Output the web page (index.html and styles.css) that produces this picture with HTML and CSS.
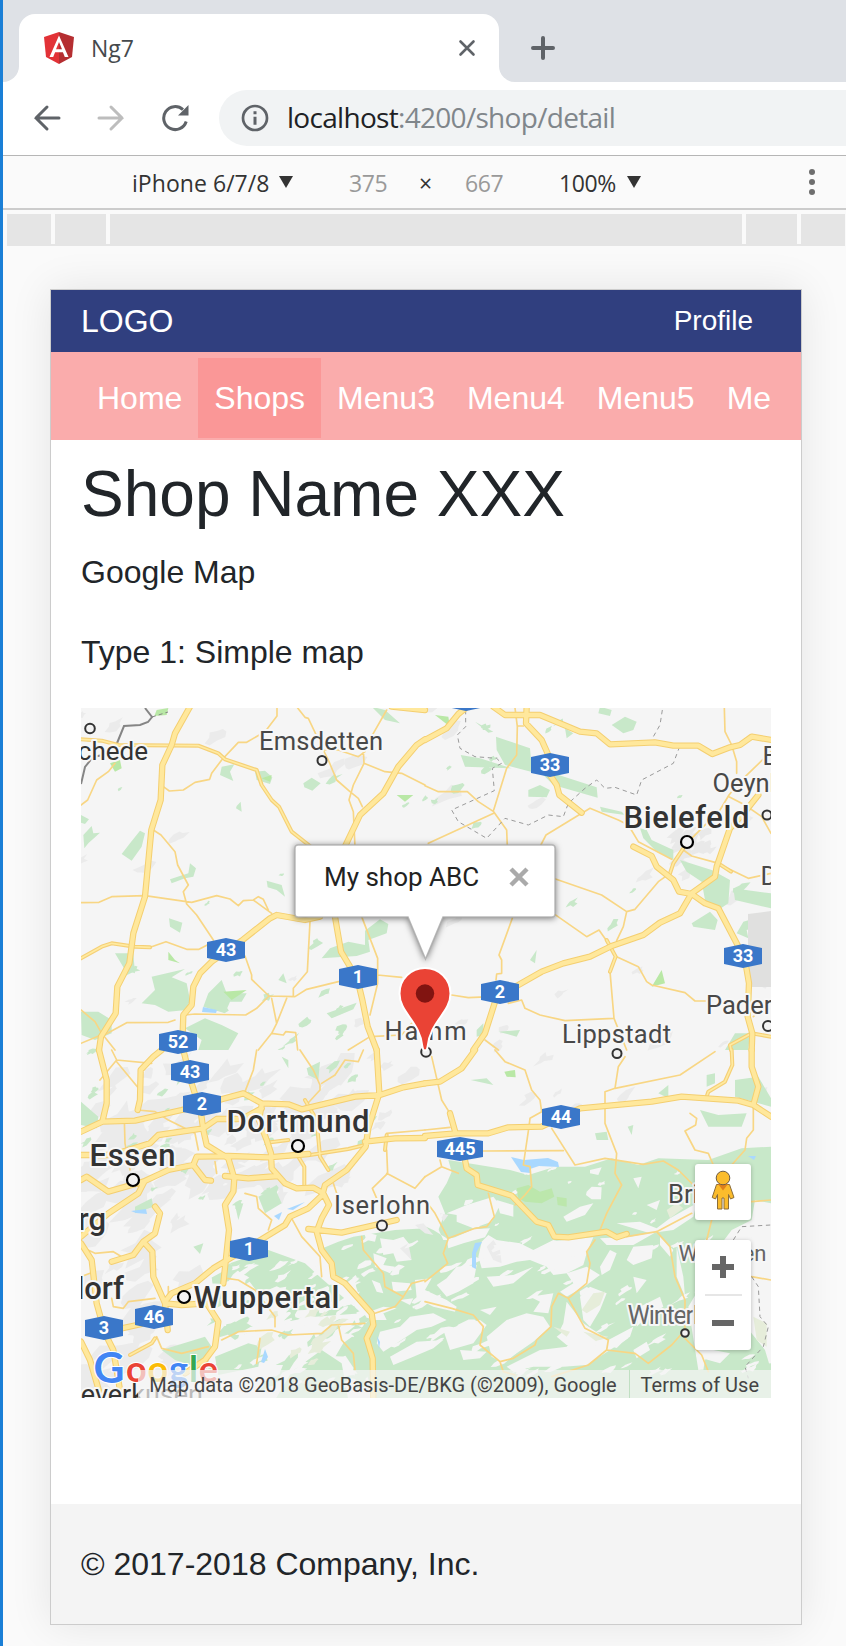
FILE: index.html
```html
<!DOCTYPE html>
<html lang="en">
<head>
<meta charset="utf-8">
<title>Ng7</title>
<link rel="stylesheet" href="styles.css">
</head>
<body>
<div class="window">
  <div class="tabstrip">
    <div class="tab-foot left"></div>
    <div class="tab">
      <svg class="favicon" width="30" height="32" viewBox="0 0 30 32"><path fill="#e23237" d="M15 0 0 5l2 20 13 7z"/><path fill="#b52e31" d="M15 0l15 5-2 20-13 7z"/><path fill="#fff" fill-rule="evenodd" d="M15 3.500 5.500 25h3.700l1.900-4.800h7.800l1.900 4.800h3.700zM15 10l3 7.200h-6z"/></svg>
      <span class="tab-title">Ng7</span>
      <svg width="18" height="18" viewBox="0 0 18 18"><path d="M2.500 2.500l13 13M15.500 2.500l-13 13" stroke="#5f6368" stroke-width="2.600" stroke-linecap="round"/></svg>
    </div>
    <div class="tab-foot right"></div>
    <svg class="new-tab" width="24" height="24" viewBox="0 0 24 24"><path d="M12 2v20M2 12h20" stroke="#5f6368" stroke-width="4" stroke-linecap="round"/></svg>
  </div>
  <div class="toolbar">
    <svg width="28" height="28" viewBox="0 0 28 28" fill="none" stroke="#5f6368" stroke-width="3" stroke-linecap="round"><path d="M26 14H3M14 3 3 14l11 11"/></svg>
    <svg width="28" height="28" viewBox="0 0 28 28" fill="none" stroke="#bdbdbd" stroke-width="3" stroke-linecap="round"><path d="M2 14h23M14 3l11 11-11 11"/></svg>
    <svg width="28" height="28" viewBox="0 0 28 28"><path d="M25.200 17.500A11.500 11.500 0 1 1 22 5.600" fill="none" stroke="#5f6368" stroke-width="3"/><path d="M27.500 1v10.500H17z" fill="#5f6368"/></svg>
    <div class="omnibox">
      <svg width="28" height="28" viewBox="0 0 28 28"><circle cx="14" cy="14" r="12" fill="none" stroke="#5f6368" stroke-width="2.700"/><path d="M14 12.800v8M14 7.200v3" stroke="#5f6368" stroke-width="3"/></svg>
      <span class="url"><b>localhost</b>:4200/shop/detail</span>
    </div>
  </div>
  <div class="devbar">
    <span class="device">iPhone 6/7/8</span><i class="tri"></i>
    <span class="dim w">375</span><span class="times">×</span><span class="dim h">667</span>
    <span class="zoom">100%</span><i class="tri"></i>
    <svg class="dots" width="6" height="26" viewBox="0 0 6 26" fill="#6e6e6e"><circle cx="3" cy="3" r="3"/><circle cx="3" cy="13" r="3"/><circle cx="3" cy="23" r="3"/></svg>
  </div>
  <div class="ruler"><i></i><i></i><i></i><i></i></div>

  <div class="phone">
    <header class="topnav"><span class="logo">LOGO</span><span class="profile">Profile</span></header>
    <nav class="menu"><div class="menu-list"><a>Home</a><a class="active">Shops</a><a>Menu3</a><a>Menu4</a><a>Menu5</a><a>Menu6</a></div></nav>
    <main>
      <h1>Shop Name XXX</h1>
      <p>Google Map</p>
      <p>Type 1: Simple map</p>
      <div class="map">
<svg class="tiles" width="690" height="690" viewBox="0 0 690 690">
<defs>
<g id="motorways">
 <g transform="translate(-6 -8) scale(.33333)">
  <path d="M345 20 300 100 290 135 262 195 257 300 229 390 210 590 175 700 163 790 127 860 122 940 78 1010 72 1050M735 650 690 660 605 645 585 655 500 722 410 785 375 820 355 860 350 915 325 945 323 1000M1050 118 1025 135 970 200 925 280 855 345 800 460 775 560 780 650 798 755 825 800 850 850 862 900 878 980 905 1050M950 20 1000 25 1050 30"/>
 </g>
 <g transform="translate(344 -8) scale(.33333)">
  <path d="M0 120 65 85 100 42 122 24M205 20 240 45 345 45 465 95 515 100 555 133 690 127 745 137 820 137 862 162 915 142 945 135 980 110 1040 120M305 20 303 70 350 120 370 165 375 225 395 255 403 285 470 338M625 440 680 468 695 500 745 540 762 575 800 582 840 610 880 625 935 730 960 780 972 850 968 950 982 1000 980 1050M1000 285 960 335 915 385 875 500 870 530 800 580 765 640 705 668 655 705 560 738 495 770 415 790 350 815 280 855 215 890 180 1000 145 1050"/>
 </g>
 <g transform="translate(-6 342) scale(.33333)">
  <path d="M72 0 95 90 95 160 82 215 18 245M82 215 180 212 320 180 505 130 560 160 640 163 680 178 840 140 915 135 985 112 1050 100M260 0 235 20 197 60 195 150 188 180M325 0 350 100 378 190 385 240 395 285 460 325 478 385 475 425 450 465 462 540 445 700M18 315 110 315 225 280 250 255 385 235 425 207 500 207 560 175M905 0 913 130 880 235 872 290 815 360 750 405 742 435 700 475 645 500 630 525 540 580 415 655 360 700 290 730 270 755M560 165 552 210 575 270 588 310 590 355 630 400 665 415 715 413 745 430 762 465 740 505 725 545 740 600 770 640 775 680 810 700 890 790 895 825 875 865 893 925 895 1050M700 312 580 322 460 318 365 320 355 345 390 390 408 392M355 345 280 360 205 395 100 425 35 380 18 390M208 395 190 430 100 490 18 560M450 378 520 385 610 378M18 580 50 630 65 760 90 850 115 900 140 1050M240 470 255 490 240 550 205 575 175 615 110 635M205 575 232 605 235 680 270 760 320 765 395 760 430 815 420 890 390 930 330 970M700 537 800 548 965 510M140 835 200 822M18 875 45 930 80 1050M870 275 960 265 1050 264M270 760 278 840"/>
 </g>
 <g transform="translate(344 342) scale(.33333)">
  <path d="M0 100 45 95 110 55 150 0M75 190 92 250M0 258 92 250 190 250 250 232 350 230 465 175 680 155 770 140 940 152 985 165 1038 200M980 0 980 50 1000 110 985 165M110 290 120 330 125 355 155 375 158 405 260 437 335 515 370 525 388 560 430 562 545 545 575 562 605 552"/>
 </g>
</g>
<g id="trunks">
 <g transform="translate(-6 -8) scale(.33333)"><path d="M18 118 80 122 130 135 370 137 430 160 450 178 545 210 560 255 590 300 612 320 650 395 720 450M18 775 80 740 110 730 180 740 225 742"/></g>
 <g transform="translate(344 -8) scale(.33333)"><path d="M775 445 745 490 735 520M545 720 572 770 555 815M880 490 918 515M1038 1010 980 1000 915 1035 918 1050"/></g>
 <g transform="translate(-6 342) scale(.33333)"><path d="M705 315 820 297 870 285M690 150 725 210 735 320 760 360M670 320 688 350 688 410M575 278 640 270M165 915 230 880 240 865M935 255 930 300"/></g>
 <g transform="translate(344 342) scale(.33333)"><path d="M920 0 922 45 900 95 850 125 845 140"/></g>
</g>
<clipPath id="frame"><rect width="690" height="690"/></clipPath>
</defs>
<rect width="690" height="690" fill="#f5f5f5"/>
<g clip-path="url(#frame)">
<g id="patches"></g>
<g class="green">
 <g transform="translate(-6 -8) scale(.33333)">
  <path d="M440 200 478 193 465 215 475 243 435 225zM540 215 570 212 592 232 585 252 545 240zM685 250 710 233 737 250 712 272 688 262zM195 392 210 400 200 440 170 482 140 462 165 430zM18 345 42 358 30 372 18 368zM25 405 50 378 55 400 75 398 40 430 28 445zM345 490 363 505 355 530 330 535 290 550 285 538 340 520zM282 655 322 668 315 698 285 680zM575 542 620 555 630 590 605 570 578 562zM870 692 915 658 940 672 935 700 880 720 885 755 845 768 740 775 765 745 820 725 870 735zM230 830 330 807 290 832 335 850 345 900 335 930 280 935 240 915 200 910 240 870zM440 840 455 880 515 880 500 905 465 905 450 940 385 920 400 880zM330 985 390 955 440 975 490 1000 460 1050 370 1050 380 1020zM18 935 70 935 110 960 110 1000 60 1020 20 1005zM120 760 175 760 180 820 150 810zM485 318 497 305 500 335 483 325zM610 840 625 820 635 850zM755 940 845 908 835 928 770 955zM890 20 930 30 975 70 930 60z"/>
 </g>
 <g transform="translate(344 -8) scale(.33333)">
  <path d="M213 110 315 145 320 200 385 220 515 262 518 293 385 255 355 225 240 195 215 150zM107 165 165 175 260 205 120 200zM310 270 345 255 375 270 365 292 310 290zM560 75 600 50 635 65 625 90 595 100zM525 20 560 30 555 48 520 40zM525 320 590 335 600 345 530 335zM645 385 665 390 680 420 745 450 745 480 690 450 655 415zM765 480 860 510 915 540 910 610 880 630 840 600 830 545 785 515zM800 670 855 635 878 660 870 690 805 680zM925 565 1038 580 1038 625 930 600zM315 780 335 750 330 790zM955 665 1038 640 1038 665 965 690 970 715 935 700zM155 990 175 970 175 1005 155 1010zM220 995 285 990 275 1010zM150 65 205 95 190 98zM420 85 445 100 425 115zM930 1000 975 1000 970 1050 900 1050z"/>
 </g>
 <g transform="translate(-6 342) scale(.33333)">
  <path d="M18 155 70 200 65 235 18 225zM835 560 960 540 1052 535 1052 1050 905 1050 875 975 850 975 800 900 900 790 790 695 770 640 730 600 790 575zM465 640 580 600 690 640 745 690 860 790 720 800 630 760 550 730 520 690zM480 465 505 460 490 510zM355 590 385 580 375 612zM180 470 230 445 235 470 180 490zM550 440 600 415 620 460 570 490zM260 900 390 860 410 890 395 960 300 930zM440 840 500 810 540 835 480 870zM420 920 520 880 560 890 550 950 430 975zM620 20 640 30 640 55zM695 55 735 35 730 90 700 75zM650 965 740 900 800 940 820 1050 600 1050z"/>
 </g>
 <g transform="translate(344 342) scale(.33333)">
  <path d="M70 330 255 360 310 375 390 350 480 350 560 325 640 345 700 325 850 330 950 295 1038 290 1038 460 990 450 980 510 920 540 860 620 820 720 790 770 820 960 1038 940 1038 1050 0 1050 0 520 40 540 60 490 40 440 65 400 80 365zM825 180 880 195 965 190 950 230 850 230zM930 90 1000 80 1038 145 1038 170 930 140zM700 130 730 105 730 145zM137 90 185 85 205 105zM510 250 545 245 550 270 515 270zM608 230 625 225 620 255zM845 75 870 70 870 100 845 110zM940 800 1020 900 1038 960 820 1050 840 930z"/>
 </g>
</g>
<g fill="#f5f5f5" transform="translate(219 442) scale(.33333)">
 <path d="M345 215 400 205 430 270 465 262 520 238 570 235 555 262 490 280 445 295 440 265 400 240zM440 190 500 165 580 140 600 165 575 215 520 235 470 215 470 195zM590 150 640 165 640 200 600 190zM860 125 875 110 905 112 903 148 875 148 858 135zM870 60 905 52 895 75 870 70zM1000 85 1025 80 1015 115zM840 170 880 160 855 195 800 215 790 200zM770 272 880 262 870 285 860 310 850 345 800 370 760 375 740 350 690 330 650 335 600 350 545 355 535 320 545 275 565 255 590 270 660 280 700 300 760 270zM410 405 440 385 470 350 530 345 520 400 475 425 440 440zM560 380 640 375 700 350 640 400 580 410zM800 370 860 350 900 375 860 405 800 440 780 425 820 400zM345 390 395 385 375 420 440 450 470 470 465 485 400 470 350 445zM240 545 300 530 330 500 400 490 440 510 395 530 350 540 290 580 250 605 230 580zM270 620 350 575 430 570 400 595 340 620 280 645zM430 540 540 510 560 525 520 580 450 600 440 570zM560 560 620 510 680 490 730 500 750 530 700 575 650 610 610 640 575 620zM690 440 760 430 745 490 700 485 720 455zM800 455 850 520 925 570 1000 530 990 560 930 600 860 645 790 650 700 650 640 665 620 650 720 600 800 590 820 560 780 540 790 520zM840 440 870 410 920 430 900 480 870 530 850 510zM770 560 795 540 850 575 800 585zM900 350 930 300 950 310 930 360 905 375zM980 330 1000 290 1060 285 1055 325 1000 345zM1000 380 1040 390 1010 430zM1080 260 1120 300 1110 320 1080 285zM1130 290 1150 380 1155 440 1130 380zM1020 470 1080 440 1090 470 1040 500 1010 530zM900 265 990 260 1070 245 1000 285 920 285zM950 220 1020 215 1070 235 1110 205 1190 160 1180 200 1120 240 1050 250zM1040 165 1080 150 1070 180zM1180 540 1240 600 1290 610 1260 640 1190 620zM240 265 280 270 310 260 330 285 320 310 335 330 290 335 280 310 250 315zM220 310 260 325 250 345 285 350 270 370 225 350zM190 245 230 255 225 275 200 270zM150 220 185 215 180 250zM275 395 330 400 335 420 280 425zM195 490 250 470 290 475 250 490 260 510 210 510zM300 450 340 445 330 465zM130 395 165 400 175 430 150 430zM215 390 240 400 250 430 230 425zM480 600 560 605 540 625 490 630zM1000 600 1040 575 1050 600 1010 625zM540 480 590 470 570 495z"/>
 <path fill="#ebebeb" d="M580 270 600 300 605 340 580 330 560 290zM345 225 370 220 400 255 375 250zM300 295 325 280 335 330zM420 190 445 195 430 215z"/>
 <path fill="#e6edda" d="M880 430 915 425 900 465 860 490 845 480zM850 545 925 560 890 575zM760 530 810 545 800 560zM1100 180 1130 160 1150 175 1110 205zM1360 500 1400 520 1400 590 1370 570z"/>
</g>
<g id="clearings"></g>
<g fill="#b9e8a6" transform="translate(-6 -8) scale(.33333)"><path d="M245 30 280 24 275 45 238 48zM105 190 135 180 140 205 120 215zM560 235 590 225 585 245zM965 285 1015 285 990 305zM445 875 515 870 470 900zM280 755 300 780 315 790 280 780zM1080 45 1120 50 1125 80zM1730 860 1760 810 1770 850z"/></g>
<g fill="#bce7ac" transform="translate(344 342) scale(.33333)"><path fill="#b9e8a6" d="M238 65 270 60 272 82 245 80z"/><path d="M275 415 310 405 345 425 380 415 388 440 350 460 300 455 280 445zM395 440 425 445 425 470 398 465z"/></g>
<path d="M667 206l23-3v76h-23z" fill="#e0e0df"/>
<g fill="#a9d8ff"><path d="M122 299l14 3-1 3-14-1zM430 449l13 3 24-2 10 4 1 5-20-1-9 3 0 4-9-1zM394 535l7-1-6 11 0 16-4-2 0-14zM50 503l15-2 1 5-11-1zM193 508l8-4-3 8zM206 501l18-7-12 8zM184 641l3 8-4 6-3-1zM296 628l3 6-1 7zM667 448l8 0-2 4z"/></g>
<g class="minor">
 <g transform="translate(-6 -8) scale(.33333)"><path d="M606 24V48L570 95 515 127 490 127 440 180 410 220 404 238 360 247 325 270 283 273 265 260M120 190 100 215 65 240 38 300 18 315M668 24 690 52 700 55 745 150 760 180 785 240 825 275 850 295 862 320M935 30 895 100 865 150 867 190 835 255 822 300 835 335 840 440M750 150 790 150 850 170 870 155M867 190 930 215 980 220 1050 255M235 390 258 405 300 455 308 495 340 555 325 575 335 612 365 645 415 720M18 608 72 607 110 590 210 587 350 607 425 587 465 597 490 617 505 602 535 600 550 590 565 598 580 630M535 600 590 640M230 740 273 725 335 748 372 748 410 728M510 768 530 825 530 838 582 888 660 890 695 868 790 845M705 665 697 815 655 865 655 888M582 888 545 925 512 945 360 942 330 945M590 895 605 970 635 895M605 970 590 1000 625 1005 632 995 662 998 668 1050M590 1000 550 1050M860 650 908 775 908 850 885 945M908 825 980 832M300 960 280 967 155 968 78 1010M18 930 60 965 80 1000 120 1050M18 1030 78 1005M820 1050 885 1010 980 1005 1010 970"/></g>
 <g transform="translate(344 -8) scale(.33333)"><path d="M270 24 277 80 275 165 245 205 206 330M277 78 295 78M0 257 40 275 127 275 160 305 206 335 245 390 247 440M10 430 206 340M470 340 363 405 345 440M478 335 495 325 580 360 610 375 640 425 740 478M385 535 530 585 605 635 630 628 700 545 735 520M605 635 595 680 575 722M385 640 485 710 522 690 550 730M262 655 222 765 230 780 230 820 215 822 213 840M80 885 130 893 200 890M250 910 290 900 300 925 345 945 420 962 565 955M555 815 567 955 605 1050M575 770 640 800 665 845 680 855 780 878 810 903 860 903M898 24 900 95 920 135 935 185 935 220M1038 155 945 245 912 285 885 330 800 415M775 450 800 468 870 487 970 535 1038 520M912 290 960 315 1010 350 1038 400M985 950 1038 900M180 1020 220 1050"/></g>
 <g transform="translate(-6 342) scale(.33333)"><path d="M75 90 125 30 110 0M125 30 230 40M125 35 187 110M148 210 150 280 165 360M188 180 240 185 280 210 360 250 370 300M545 0 535 60 508 130M675 0 715 60 735 105 735 120 680 180M740 100 780 75 810 30 850 35 865 0M935 250 1050 240M935 300 938 370 892 415 905 445M935 370 1020 415 1050 380M18 590 60 610 115 605 140 620M420 335 425 370M510 430 545 440 550 475 590 510 580 540M18 680 45 670M110 745 115 770 145 775 160 755 240 745M245 860 260 895 320 910 400 890M440 870 490 845 590 840 640 855 740 850 770 825 870 820M555 865 545 940M775 400 785 430M860 560 865 600 925 670 930 710 985 740 1010 700 1050 690M985 740 960 770 900 790M790 825 800 870 835 910 840 960M650 505 680 560 735 620 740 680M455 685 490 690 540 720 600 800 600 830M280 710 280 740"/></g>
 <g transform="translate(344 342) scale(.33333)"><path d="M20 20 50 150 75 190M0 240 75 232M175 303 415 302M380 235 450 345 540 325 655 343 715 333 760 360 805 405M312 230 295 345 315 350 320 410 300 435 270 465M210 0 240 35 300 60 320 120 345 150 350 185 315 205 312 230M600 20 580 50 570 115 765 75 870 5M570 115 540 125 540 220 575 310 570 370 590 405 545 490 525 540M795 190 815 205 812 225 780 243 810 300 850 310 865 345M985 170 985 240 965 265 960 300 920 345M605 560 695 545 735 590 750 680 780 750 780 840M695 545 800 490M980 455 1038 450M860 510 845 570M980 680 1038 690M0 380 50 350 100 370M50 350 45 330M0 450 30 490 70 565 55 610 68 640 0 695M70 565 150 535 185 530 208 500 190 430M510 570 485 605 495 640 485 700 430 745 400 730 380 770 378 830 335 870 330 885 265 925 225 935M430 745 480 835 550 870 545 900 490 945 380 980M545 900 630 910 670 940 740 885 780 840M0 755 80 775 145 795 175 830 165 885 225 935 235 965 270 975M780 865 830 915 850 965"/></g>
</g>
<g class="border" transform="translate(344 -8) scale(.33333)"><path d="M122 30V80L97 105 105 145 150 170 215 175 230 190 202 205 208 272 80 330 100 365 185 415 240 355 310 375 370 345 415 350 430 310 480 265 515 240 540 265 570 262 635 285 650 240 745 190 762 145M712 30 705 75 685 110 690 125"/></g>
<g class="border" transform="translate(344 342) scale(.33333)"><path d="M925 570 950 530 1038 525M980 680 1000 710 1005 800 1030 830 1015 890 960 950 970 985"/></g>
<path d="M64 0l7 9-4 5-8 3-16 1L32 45 12 49 4 59 0 76" fill="none" stroke="#858585" stroke-width="2"/>
<path d="M71 9l16-5" fill="none" stroke="#858585" stroke-dasharray="4 3"/>
<use href="#trunks" class="trunk-case"/><use href="#trunks" class="trunk-fill"/>
<use href="#motorways" class="mway-case"/><use href="#motorways" class="mway-fill"/>
<g class="dot"><circle cx="9" cy="20.500" r="4.800"/><circle cx="241" cy="52.500" r="4.500"/><circle cx="686" cy="107" r="4.500"/><circle cx="345" cy="344" r="4.800"/><circle cx="536" cy="345.500" r="4.500"/><circle cx="687" cy="318" r="5"/><circle cx="301" cy="517.500" r="5"/><circle cx="604" cy="625" r="3.800"/></g>
<g class="dot big"><circle cx="606" cy="134" r="6"/><circle cx="217" cy="438" r="6"/><circle cx="52" cy="472" r="6"/><circle cx="103" cy="589" r="6"/></g>
<g class="label">
 <text x="67" y="51.500" text-anchor="end" fill="#333" font-size="26">Enschede</text>
 <text x="178" y="42" textLength="124">Emsdetten</text>
 <text x="303.500" y="332" textLength="82">Hamm</text>
 <text x="681.500" y="57">Bad</text><text x="631.500" y="84">Oeynhausen</text>
 <text x="679.500" y="177">Detmold</text>
 <text x="481" y="335" textLength="109">Lippstadt</text>
 <text x="625" y="306">Paderborn</text>
 <text x="253" y="506" textLength="96">Iserlohn</text>
 <text x="587" y="495">Brilon</text>
 <text x="597.500" y="553" class="faint small" textLength="88">Willingen</text>
 <text x="546.500" y="616" class="faint" textLength="112">Winterberg</text>
 <text x="122" y="696" text-anchor="end" class="lev">Leverkusen</text>
</g>
<g class="label city">
 <text x="542.500" y="120" textLength="126">Bielefeld</text>
 <text x="145.500" y="424" textLength="143">Dortmund</text>
 <text x="8.500" y="458" textLength="86">Essen</text>
 <text x="25" y="521.500" text-anchor="end">Duisburg</text>
 <text x="43" y="590.500" text-anchor="end">Düsseldorf</text>
 <text x="112.500" y="600" textLength="146">Wuppertal</text>
</g>
<g id="shields" class="shields"></g>
<g class="glogo"><text fill="#4285f4" x="12.500" y="674.500" textLength="31" lengthAdjust="spacingAndGlyphs" font-size="42">G</text><text x="45" y="674" textLength="92"><tspan fill="#ea4335">o</tspan><tspan fill="#fbbc05">o</tspan><tspan fill="#4285f4">g</tspan><tspan fill="#34a853">l</tspan><tspan fill="#ea4335">e</tspan></text></g>
</g>
</svg>
<div class="attribution"><span class="credit">Map data ©2018 GeoBasis-DE/BKG (©2009), Google</span><span class="terms">Terms of Use</span></div>
<svg class="callout" width="290" height="150" viewBox="0 0 290 150"><path d="M19 16H273a3 3 0 0 1 3 3V85a3 3 0 0 1-3 3H164L146.500 130 129 88H19a3 3 0 0 1-3-3V19a3 3 0 0 1 3-3z" fill="#fff" stroke="#aaa" stroke-opacity=".8" stroke-width="1.500"/></svg>
<div class="info"><span>My shop ABC</span><svg width="20" height="20" viewBox="0 0 20 20"><path d="M2 2l16 16M18 2 2 18" stroke="#aaa" stroke-width="4.500"/></svg></div>
<svg class="pin" width="56" height="88" viewBox="0 0 56 88"><path d="M28 1C14 1 2.500 12 2.500 26.500 2.500 46 23 54 25.500 80q.4 3.500 2.500 3.500t2.500-3.500C33 54 53.500 46 53.500 26.500 53.500 12 42 1 28 1z" fill="#ea4335" stroke="#fff" stroke-width="2"/><circle cx="28" cy="26.500" r="9.200" fill="#811411"/></svg>
<div class="control pegman"><svg width="24" height="40" viewBox="0 0 24 40"><path d="M5.500 14.500h13l4.500 13-3.500 1.500-2-4.500V39h-4.500V28h-2v11H6.500V24.500l-2 4.500L1.200 27.500z" fill="#fbbc2c" stroke="#8a6d3b" stroke-width="1"/><path d="M7 14h10l-5 6.500z" fill="#e0801a"/><circle cx="12" cy="8" r="6.800" fill="#fbbc2c" stroke="#6d5b45" stroke-width="1"/></svg></div>
<div class="control zoomer"><svg width="22" height="22" viewBox="0 0 22 22"><path d="M11 0v22M0 11h22" stroke="#666" stroke-width="6"/></svg><i></i><svg width="22" height="22" viewBox="0 0 22 22"><path d="M0 11h22" stroke="#666" stroke-width="6"/></svg></div>
      </div>
    </main>
    <footer>© 2017-2018 Company, Inc.</footer>
  </div>
</div>
<script src="map.js"></script>
</body>
</html>
```

FILE: styles.css
```css
* { box-sizing: border-box; }
body { margin: 0; background: #fafafa; font-family: "Liberation Sans", Arial, sans-serif; overflow: hidden; }
svg { display: block; flex: none; }
.window { width: 846px; height: 1646px; border-left: 3px solid #1a7fd6; background: #fafafa; position: relative; overflow: hidden; }
.window::before { content: ""; position: absolute; left: -3px; top: 0; width: 1px; height: 1646px; background: #14202e; }

.tabstrip { height: 82px; display: flex; align-items: flex-end; background: #dee1e6; }
.tab { width: 480px; height: 68px; border-radius: 16px 16px 0 0; background: #fff; display: flex; align-items: center; padding: 0 23px 0 25px; }
.tab-foot { width: 16px; height: 16px; background: #fff; position: relative; }
.tab-foot::after { content: ""; position: absolute; inset: 0; background: #dee1e6; }
.tab-foot.left::after { border-bottom-right-radius: 16px; }
.tab-foot.right::after { border-bottom-left-radius: 16px; }
.tab-title { flex: 1; margin-left: 17px; font: 23px "Open Sans", sans-serif; letter-spacing: 0; color: #45494d; }
.new-tab { margin: 0 0 22px 16px; }

.toolbar { height: 73px; background: #fff; display: flex; align-items: center; padding: 0 0 1px 30px; gap: 36px; }
.omnibox { flex: 1; height: 56px; background: #f1f3f4; border-radius: 28px 0 0 28px; display: flex; align-items: center; padding-left: 22px; margin-left: -6px; margin-top: -1px; }
.url { margin-left: 18px; font: 28px "Open Sans", sans-serif; letter-spacing: -.7px; color: #80868b; white-space: nowrap; margin-top: -2px; }
.url b { font-weight: 400; color: #202124; }

.devbar { height: 55px; border-top: 1px solid #b6b6b6; border-bottom: 2px solid #ccc; display: flex; align-items: center; padding: 0 31px 0 129px; font: 23px "Open Sans", sans-serif; letter-spacing: 0; color: #333; white-space: nowrap; }
.devbar span { padding-top: 2px; }
.device { width: 137px; }
.tri { border: 7px solid transparent; border-top: 12px solid #333; border-bottom: 0; margin-left: 10px; }
.device { letter-spacing: .05px; }
.dim { width: 38px; color: #999; letter-spacing: -.4px; }
.w { margin-left: 56px; }
.times { width: 18px; margin-left: 32px; }
.h { margin-left: 28px; }
.zoom { width: 58px; margin-left: 56px; letter-spacing: -.4px; }
.dots { margin-left: auto; }

.ruler { height: 32px; margin: 4px 1px 0 4px; background: #e5e5e5; display: grid; grid-template-columns: 48px 55px 636px 55px; justify-items: end; }
.ruler i { width: 4px; height: 30px; background: #fafafa; }

.phone { width: 752px; height: 1336px; margin: 43px 0 0 47px; border: 1px solid #ccc; background: #fff; box-shadow: 0 0 40px rgba(0,0,0,.09); display: flex; flex-direction: column; color: #212529; }
.topnav { height: 62px; background: #303f7f; color: #fff; display: flex; align-items: center; justify-content: space-between; padding: 0 48px 0 30px; font-size: 32px; }
.profile { font-size: 28px; }
.menu { height: 88px; background: #faacac; padding: 6px 30px 2px; }
.menu-list { display: flex; overflow: hidden; height: 80px; }
.menu a { flex: none; padding: 0 16px; font-size: 32px; line-height: 81px; color: #fff; }
.menu .active { background: #fa9797; }
main { padding: 16px 30px 0; flex: 1; }
h1 { margin: 0 0 15px; font-size: 64px; line-height: 77px; font-weight: 400; }
p { margin: 0 0 32px; font-size: 32px; line-height: 48px; }
footer { height: 120px; background: #f4f4f4; padding: 36px 30px; font-size: 32px; line-height: 48px; }

.map { position: relative; width: 690px; height: 690px; overflow: hidden; font-family: Roboto, sans-serif; }
.green { fill: #c8e8c9; }
.minor, .border, .mway-case, .mway-fill, .trunk-case, .trunk-fill { fill: none; stroke-linejoin: round; stroke-linecap: round; }
.minor { stroke: #f8d684; stroke-width: 5; }
.border { stroke: #9a9a9a; stroke-width: 3; stroke-linecap: butt; stroke-dasharray: 13 11; }
.mway-case { stroke: #f4cf70; stroke-width: 19; }
.mway-fill { stroke: #ffe89c; stroke-width: 13; }
.trunk-case { stroke: #f5d077; stroke-width: 12; }
.trunk-fill { stroke: #ffeaa0; stroke-width: 5; }
.dot { fill: #f3f3f3; stroke: #333; stroke-width: 2; }
.big { stroke: #000; stroke-width: 2.2; }
.label { font-size: 25.500px; fill: #484848; stroke: #f7f7f7; stroke-width: 4px; stroke-linejoin: round; paint-order: stroke; }
.city { font-size: 31px; font-weight: 500; fill: #333; }
.faint { fill: #666; }
.small { font-size: 22px; }
.lev { font-size: 27px; fill: #333; }
.shields { font-size: 18px; font-weight: 700; fill: #fff; text-anchor: middle; }
.glogo { font-family: Lato, sans-serif; font-size: 36px; font-weight: 700; stroke: #fff; stroke-width: 2px; paint-order: stroke; }
.attribution { position: absolute; left: 57px; right: 0; bottom: 0; height: 28px; display: flex; justify-content: flex-end; background: rgba(245,245,245,.7); font-size: 20px; line-height: 30px; color: #444; white-space: nowrap; }
.credit { padding-right: 12px; }
.terms { padding: 0 12px 0 11px; border-left: 1px solid #c0dfc2; }
.callout { position: absolute; left: 198px; top: 121px; filter: drop-shadow(0 1px 3px rgba(0,0,0,.5)); }
.info { position: absolute; left: 243px; top: 154px; display: flex; align-items: center; gap: 30px; font-size: 26px; line-height: 30px; color: #222; }
.pin { position: absolute; left: 316px; top: 259px; }
.control { position: absolute; right: 20px; width: 56px; background: #fff; border-radius: 3px; box-shadow: 0 1px 4px rgba(0,0,0,.25); display: flex; flex-direction: column; align-items: center; justify-content: center; }
.pegman { top: 456px; height: 56px; padding-bottom: 4px; }
.zoomer { top: 532px; height: 110px; gap: 16px; }
.zoomer i { width: 37px; height: 2px; background: #e6e6e6; }
```

FILE: map.js
```js
// Deterministic pseudo-random source so the terrain is stable between loads.
let seed = 11;
const rnd = () => (seed = (seed * 16807) % 2147483647) / 2147483647;

// Adds n jagged patches inside the box x, y, w, h, leaning along the valleys.
function scatter(host, color, n, x, y, w, h, size, stretch = 1.3) {
  let d = "";
  for (let i = 0; i < n; i++) {
    const cx = x + rnd() * w, cy = y + rnd() * h, r = size * (0.5 + rnd());
    const pts = [];
    for (let k = 0; k < 9; k++) {
      const a = (k / 9) * Math.PI * 2, q = r * (0.3 + rnd() * 0.9);
      const dx = Math.cos(a) * q * stretch, dy = Math.sin(a) * q * 0.8;
      pts.push((cx + dx).toFixed(1) + " " + (cy + dy - dx * 0.45).toFixed(1));
    }
    d += "M" + pts.join("L") + "z";
  }
  const p = document.createElementNS("http://www.w3.org/2000/svg", "path");
  p.setAttribute("d", d);
  p.setAttribute("fill", color);
  document.getElementById(host).appendChild(p);
}

// Built-up areas
scatter("patches", "#ebebeb", 30, 0, 0, 690, 340, 8);
scatter("patches", "#ebebeb", 95, 0, 360, 270, 130, 13);
scatter("patches", "#ebebeb", 30, 0, 490, 110, 200, 14);
scatter("patches", "#ebebeb", 14, 280, 330, 410, 110, 7);
scatter("patches", "#e9e9e9", 12, 585, 125, 45, 30, 8);
// Small woods
scatter("patches", "#c8e8c9", 32, 0, 0, 690, 330, 4.5);
scatter("patches", "#c8e8c9", 40, 0, 260, 290, 240, 4.5);
scatter("patches", "#c8e8c9", 50, 130, 560, 180, 120, 8);
// Openings in the forest
scatter("clearings", "#f5f5f5", 60, 330, 530, 340, 140, 4, 2.4);
scatter("clearings", "#f5f5f5", 14, 350, 460, 300, 60, 3);
scatter("clearings", "#f5f5f5", 45, 150, 550, 130, 130, 5, 2);
scatter("clearings", "#f5f5f5", 14, 250, 530, 90, 110, 4, 2);
scatter("clearings", "#e6edda", 16, 180, 600, 80, 80, 7);

// Autobahn number shields: label, centre x, centre y
const roads = [["33", 469, 57], ["", 385, -9], ["43", 145, 242], ["1", 277, 269], ["33", 662, 248], ["2", 419, 284],
  ["52", 97, 334], ["43", 109, 364], ["2", 121, 396], ["44", 480, 409], ["445", 379, 441], ["1", 168, 541], ["46", 73, 609], ["3", 23, 620]];
document.getElementById("shields").innerHTML = roads.map(([t, x, y]) => {
  const w = t.length > 2 ? 23 : 19;
  return `<path fill="#3a77c9" d="M${x - w} ${y - 8}L${x} ${y - 12}L${x + w} ${y - 8}V${y + 8}L${x} ${y + 12}L${x - w} ${y + 8}z"/><text x="${x}" y="${y + 6}">${t}</text>`;
}).join("");
```
